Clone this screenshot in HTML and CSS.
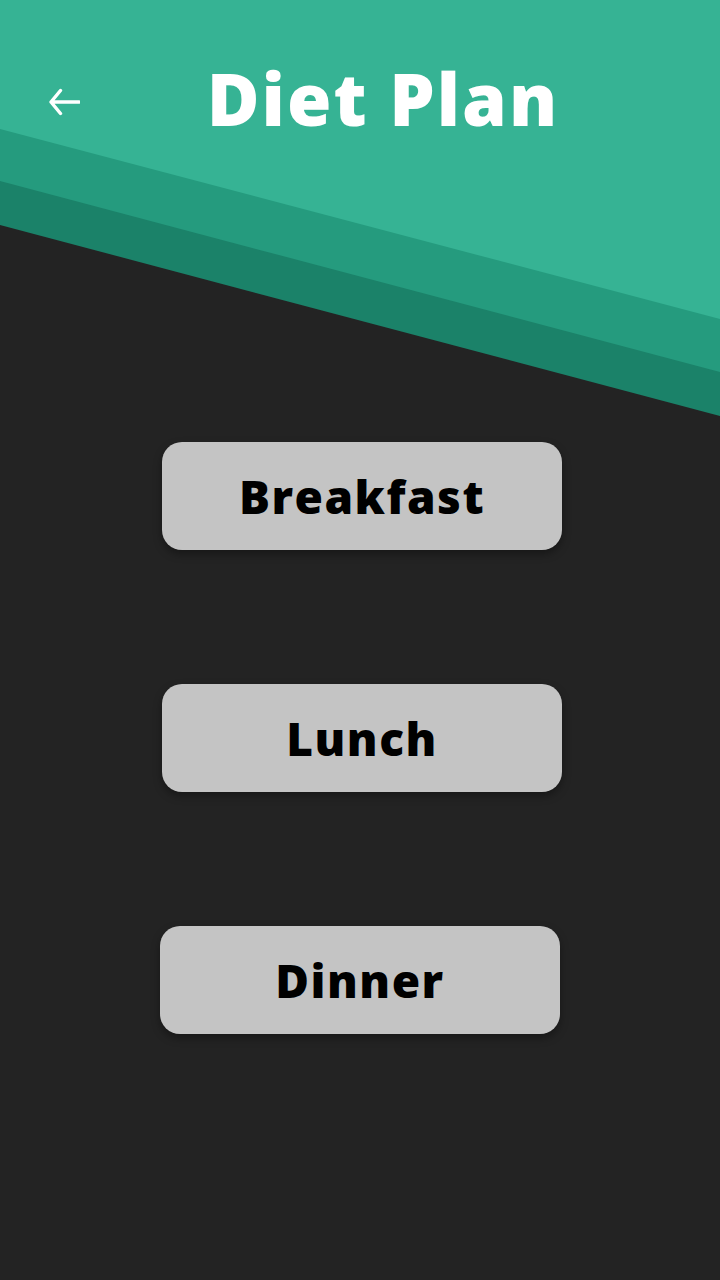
FILE: index.html
```html
<!DOCTYPE html>
<html lang="en">
<head>
<meta charset="utf-8">
<title>Diet Plan</title>
<link rel="stylesheet" href="styles.css">
</head>
<body>
<div class="screen">
  <svg class="backdrop" width="720" height="420" viewBox="0 0 720 420" aria-hidden="true">
    <polygon points="0,0 720,0 720,416 0,225" fill="#1b8269"/>
    <polygon points="0,0 720,0 720,372 0,181" fill="#259b7e"/>
    <polygon points="0,0 720,0 720,319 0,129" fill="#36b394"/>
  </svg>
  <header class="header">
    <button class="back" aria-label="Back">
      <svg width="32" height="28" viewBox="0 0 32 28">
        <path d="M31 14H3M12.5 2.5L3 14l9.5 11.5" fill="none" stroke="#fff" stroke-width="3.4" stroke-linecap="round" stroke-linejoin="round"/>
      </svg>
    </button>
    <h1 class="title">Diet Plan</h1>
  </header>
  <main class="menu">
    <button class="meal shift">Breakfast</button>
    <button class="meal shift">Lunch</button>
    <button class="meal">Dinner</button>
  </main>
</div>
</body>
</html>
```
FILE: styles.css
```css
html, body {
  margin: 0;
  padding: 0;
  background: #232323;
}
.screen {
  position: relative;
  width: 720px;
  height: 1280px;
  overflow: hidden;
  background: #232323;
  font-family: "Open Sans", "DejaVu Sans", sans-serif;
}
.backdrop {
  position: absolute;
  left: 0;
  top: 0;
  display: block;
}
.header {
  position: relative;
  display: flex;
  align-items: center;
  padding: 56px 0 0 48px;
  height: 92px;
}
.back {
  width: 32px;
  height: 28px;
  padding: 0;
  border: 0;
  background: none;
  display: flex;
  align-items: center;
  justify-content: center;
}
.back svg {
  display: block;
}
.title {
  flex: 1;
  margin: -8px 34px 0 0;
  text-align: center;
  color: #fff;
  font-size: 72px;
  font-weight: 800;
  letter-spacing: 2px;
  line-height: 92px;
}
.menu {
  position: relative;
  display: flex;
  flex-direction: column;
  align-items: center;
  gap: 134px;
  padding-top: 294px;
}
.meal {
  width: 400px;
  height: 108px;
  border: 0;
  border-radius: 20px;
  background: #c4c4c4;
  color: #000;
  font-family: "Open Sans", "DejaVu Sans", sans-serif;
  font-size: 46px;
  font-weight: 800;
  letter-spacing: 1.5px;
  box-shadow: 0 4px 8px rgba(0, 0, 0, 0.35);
  padding: 0;
}
.meal.shift {
  margin-left: 4px;
}
```
